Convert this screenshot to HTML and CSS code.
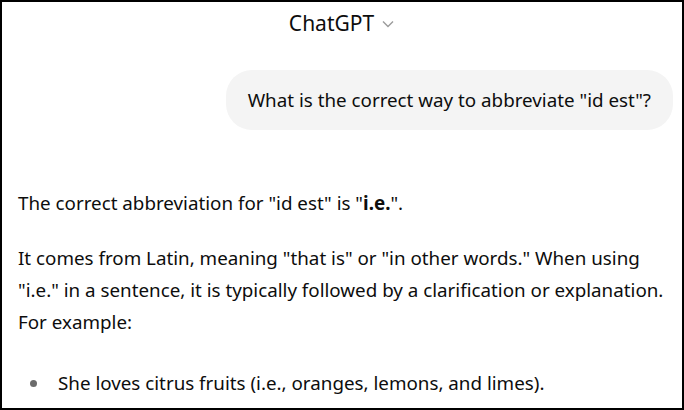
FILE: index.html
```html
<!DOCTYPE html>
<html lang="en">
<head>
    <meta charset="UTF-8">
    <meta name="viewport" content="width=device-width, initial-scale=1.0">
    <title>ChatGPT</title>
    <link rel="stylesheet" href="styles.css">
</head>
<body>
    <div class="frame">
        <header class="topbar">
            <span class="model">ChatGPT</span>
            <svg class="chevron" width="14" height="14" viewBox="0 0 14 14">
                <path d="M2 4.5 L7 9.5 L12 4.5" fill="none" stroke="#9b9b9b" stroke-width="1.4"/>
            </svg>
        </header>

        <div class="thread">
            <div class="user-row">
                <div class="bubble">What is the correct way to abbreviate "id est"?</div>
            </div>

            <div class="answer">
                <p>The correct abbreviation for "id est" is "<strong>i.e.</strong>".</p>
                <p>It comes from Latin, meaning "that is" or "in other words." When using "i.e." in a sentence, it is typically followed by a clarification or explanation. For example:</p>
                <ul>
                    <li>She loves citrus fruits (i.e., oranges, lemons, and limes).</li>
                </ul>
            </div>
        </div>
    </div>
</body>
</html>
```

FILE: styles.css
```css
body { margin: 0; font-family: "Noto Sans", "Open Sans", sans-serif; color: #0d0d0d; background: #fff; }
.frame { width: 684px; height: 410px; box-sizing: border-box; border: 2px solid #000; overflow: hidden; }
.topbar { display: flex; justify-content: center; align-items: center; gap: 7px; height: 42px; }
.model { font-size: 21px; }
.chevron { margin-top: 2px; }
.thread { padding: 0 9px 0 16px; }
.user-row { display: flex; justify-content: flex-end; margin-top: 26px; }
.bubble { background: #f4f4f4; border-radius: 26px; padding: 14px 22px; font-size: 18.8px; line-height: 32px; }
.answer { margin-top: 57px; font-size: 18.8px; line-height: 32px; }
.answer p { margin: 0 0 23px; }
.answer strong { font-weight: 700; }
.answer ul { margin: 29px 0 0; padding-left: 12px; list-style: none; }
.answer li { display: flex; align-items: center; }
.answer li::before { content: ""; width: 7px; height: 7px; border-radius: 50%; background: #6b6b6b; margin-right: 21px; flex-shrink: 0; }
```
